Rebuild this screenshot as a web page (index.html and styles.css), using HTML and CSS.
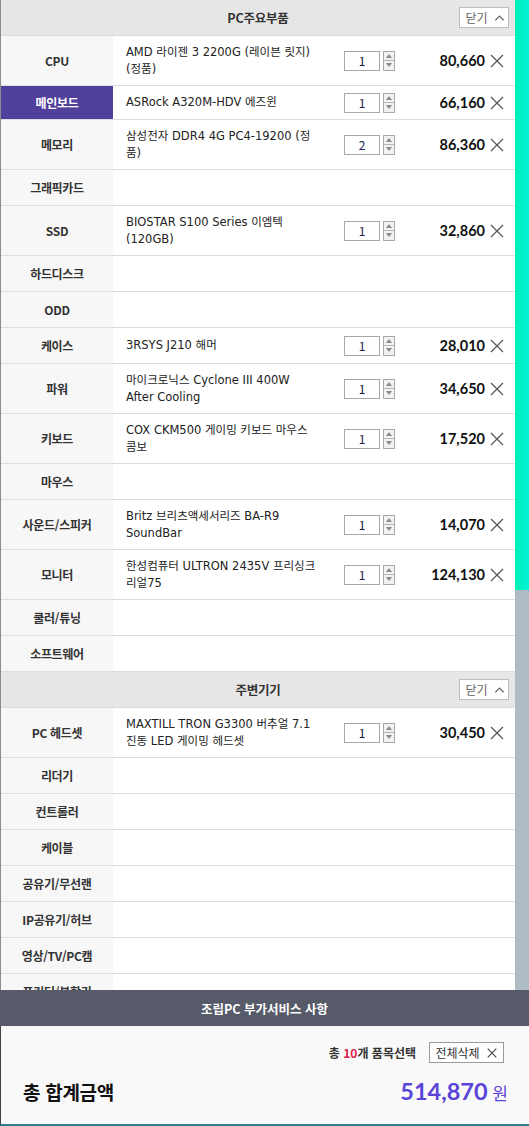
FILE: index.html
```html
<!DOCTYPE html>
<html lang="ko">
<head>
<meta charset="utf-8">
<title>PC 견적</title>
<link rel="stylesheet" href="styles.css">
</head>
<body>
<div class="page">
  <main class="list">
    <section class="group">
      <div class="group-head">
        <h2 class="group-title">PC주요부품</h2>
        <button class="fold">닫기 <svg viewBox="0 0 12 8" class="chev"><path d="M1.5 6.5 L6 2 L10.5 6.5" fill="none" stroke="#666" stroke-width="1.3"/></svg></button>
      </div>

      <div class="row">
        <div class="label">CPU</div>
        <div class="name">AMD 라이젠 3 2200G (레이븐 릿지) (정품)</div>
        <div class="qty"><span class="qty-box">1</span><span class="spin"><span class="up"></span><span class="down"></span></span></div>
        <div class="price">80,660</div>
        <div class="del"><svg viewBox="0 0 14 14"><path d="M1 1 L13 13 M13 1 L1 13" stroke="#555" stroke-width="1.2"/></svg></div>
      </div>

      <div class="row active">
        <div class="label">메인보드</div>
        <div class="name">ASRock A320M-HDV 에즈윈</div>
        <div class="qty"><span class="qty-box">1</span><span class="spin"><span class="up"></span><span class="down"></span></span></div>
        <div class="price">66,160</div>
        <div class="del"><svg viewBox="0 0 14 14"><path d="M1 1 L13 13 M13 1 L1 13" stroke="#555" stroke-width="1.2"/></svg></div>
      </div>

      <div class="row">
        <div class="label">메모리</div>
        <div class="name">삼성전자 DDR4 4G PC4-19200 (정품)</div>
        <div class="qty"><span class="qty-box">2</span><span class="spin"><span class="up"></span><span class="down"></span></span></div>
        <div class="price">86,360</div>
        <div class="del"><svg viewBox="0 0 14 14"><path d="M1 1 L13 13 M13 1 L1 13" stroke="#555" stroke-width="1.2"/></svg></div>
      </div>

      <div class="row"><div class="label">그래픽카드</div><div class="name"></div></div>

      <div class="row">
        <div class="label">SSD</div>
        <div class="name">BIOSTAR S100 Series 이엠텍 (120GB)</div>
        <div class="qty"><span class="qty-box">1</span><span class="spin"><span class="up"></span><span class="down"></span></span></div>
        <div class="price">32,860</div>
        <div class="del"><svg viewBox="0 0 14 14"><path d="M1 1 L13 13 M13 1 L1 13" stroke="#555" stroke-width="1.2"/></svg></div>
      </div>

      <div class="row"><div class="label">하드디스크</div><div class="name"></div></div>
      <div class="row"><div class="label">ODD</div><div class="name"></div></div>

      <div class="row">
        <div class="label">케이스</div>
        <div class="name">3RSYS J210 해머</div>
        <div class="qty"><span class="qty-box">1</span><span class="spin"><span class="up"></span><span class="down"></span></span></div>
        <div class="price">28,010</div>
        <div class="del"><svg viewBox="0 0 14 14"><path d="M1 1 L13 13 M13 1 L1 13" stroke="#555" stroke-width="1.2"/></svg></div>
      </div>

      <div class="row">
        <div class="label">파워</div>
        <div class="name">마이크로닉스 Cyclone III 400W After Cooling</div>
        <div class="qty"><span class="qty-box">1</span><span class="spin"><span class="up"></span><span class="down"></span></span></div>
        <div class="price">34,650</div>
        <div class="del"><svg viewBox="0 0 14 14"><path d="M1 1 L13 13 M13 1 L1 13" stroke="#555" stroke-width="1.2"/></svg></div>
      </div>

      <div class="row">
        <div class="label">키보드</div>
        <div class="name">COX CKM500 게이밍 키보드 마우스 콤보</div>
        <div class="qty"><span class="qty-box">1</span><span class="spin"><span class="up"></span><span class="down"></span></span></div>
        <div class="price">17,520</div>
        <div class="del"><svg viewBox="0 0 14 14"><path d="M1 1 L13 13 M13 1 L1 13" stroke="#555" stroke-width="1.2"/></svg></div>
      </div>

      <div class="row"><div class="label">마우스</div><div class="name"></div></div>

      <div class="row">
        <div class="label">사운드/스피커</div>
        <div class="name">Britz 브리츠액세서리즈 BA-R9 SoundBar</div>
        <div class="qty"><span class="qty-box">1</span><span class="spin"><span class="up"></span><span class="down"></span></span></div>
        <div class="price">14,070</div>
        <div class="del"><svg viewBox="0 0 14 14"><path d="M1 1 L13 13 M13 1 L1 13" stroke="#555" stroke-width="1.2"/></svg></div>
      </div>

      <div class="row">
        <div class="label">모니터</div>
        <div class="name">한성컴퓨터 ULTRON 2435V 프리싱크 리얼75</div>
        <div class="qty"><span class="qty-box">1</span><span class="spin"><span class="up"></span><span class="down"></span></span></div>
        <div class="price">124,130</div>
        <div class="del"><svg viewBox="0 0 14 14"><path d="M1 1 L13 13 M13 1 L1 13" stroke="#555" stroke-width="1.2"/></svg></div>
      </div>

      <div class="row"><div class="label">쿨러/튜닝</div><div class="name"></div></div>
      <div class="row"><div class="label">소프트웨어</div><div class="name"></div></div>
    </section>

    <section class="group">
      <div class="group-head">
        <h2 class="group-title">주변기기</h2>
        <button class="fold">닫기 <svg viewBox="0 0 12 8" class="chev"><path d="M1.5 6.5 L6 2 L10.5 6.5" fill="none" stroke="#666" stroke-width="1.3"/></svg></button>
      </div>

      <div class="row">
        <div class="label">PC 헤드셋</div>
        <div class="name">MAXTILL TRON G3300 버추얼 7.1 진동 LED 게이밍 헤드셋</div>
        <div class="qty"><span class="qty-box">1</span><span class="spin"><span class="up"></span><span class="down"></span></span></div>
        <div class="price">30,450</div>
        <div class="del"><svg viewBox="0 0 14 14"><path d="M1 1 L13 13 M13 1 L1 13" stroke="#555" stroke-width="1.2"/></svg></div>
      </div>

      <div class="row"><div class="label">리더기</div><div class="name"></div></div>
      <div class="row"><div class="label">컨트롤러</div><div class="name"></div></div>
      <div class="row"><div class="label">케이블</div><div class="name"></div></div>
      <div class="row"><div class="label">공유기/무선랜</div><div class="name"></div></div>
      <div class="row"><div class="label">IP공유기/허브</div><div class="name"></div></div>
      <div class="row"><div class="label">영상/TV/PC캠</div><div class="name"></div></div>
      <div class="row"><div class="label">프린터/복합기</div><div class="name"></div></div>
      <div class="row"><div class="label">기타</div><div class="name"></div></div>
    </section>
  </main>
  <div class="scrollbar"><div class="thumb"></div></div>
</div>

<footer class="summary">
  <div class="summary-head">조립PC 부가서비스 사항</div>
  <div class="summary-body">
    <div class="count-line">
      <span class="count">총 <em>10</em>개 품목선택</span>
      <button class="clear-all">전체삭제 <svg viewBox="0 0 14 14"><path d="M2 2 L12 12 M12 2 L2 12" stroke="#444" stroke-width="1.3"/></svg></button>
    </div>
    <div class="total-line">
      <span class="total-label">총 합계금액</span>
      <span class="total-value"><strong>514,870</strong> 원</span>
    </div>
  </div>
</footer>
</body>
</html>
```

FILE: styles.css
```css
* { box-sizing: border-box; }

html, body {
  margin: 0;
  padding: 0;
  height: 1126px;
  overflow: hidden;
  background: #ffffff;
  font-family: "Noto Sans CJK KR", "Noto Sans", sans-serif;
  color: #222;
}

.page {
  display: flex;
  height: 1126px;
  overflow: hidden;
}

.list {
  width: 515px;
  flex: none;
  border-left: 1px solid #8c8c8c;
  background: #fff;
}

.scrollbar {
  width: 14px;
  flex: none;
  background: #b0bcc4;
  height: 1126px;
}

.thumb {
  height: 590px;
  background: linear-gradient(90deg, #00f2b4 0%, #00f0c8 50%, #00f4d6 100%);
}

.group-head {
  height: 36px;
  background: #e6e6e6;
  border-bottom: 1px solid #dcdcdc;
  display: flex;
  align-items: center;
  justify-content: center;
  position: relative;
}

.group-title {
  margin: 0;
  font-size: 12.5px;
  font-weight: 700;
  color: #333;
  letter-spacing: -0.2px;
}

.fold {
  position: absolute;
  right: 6px;
  top: 7px;
  width: 50px;
  height: 21px;
  background: #fff;
  border: 1px solid #bdbdbd;
  font-family: inherit;
  font-size: 12px;
  color: #666;
  padding: 0 0 0 2px;
  display: flex;
  align-items: center;
  justify-content: center;
  gap: 6px;
  line-height: 1;
}

.chev { width: 11px; height: 8px; }

.row {
  display: grid;
  grid-template-columns: 112px 231px 52px 1fr 26px;
  align-items: center;
  min-height: 36px;
  border-bottom: 1px solid #dedede;
}

.row.active { min-height: 34px; }

.label {
  align-self: stretch;
  background: #f7f7f7;
  display: flex;
  align-items: center;
  justify-content: center;
  font-size: 12px;
  font-weight: 700;
  color: #333;
  letter-spacing: -0.3px;
}

.row.active .label {
  background: #50409c;
  color: #fff;
}

.name {
  padding: 8px 26px 8px 13px;
  font-family: "DejaVu Sans", "Noto Sans CJK KR", sans-serif;
  font-size: 11.5px;
  line-height: 16.5px;
  color: #222;
}

.row.active .name { padding-top: 7px; padding-bottom: 7px; }

.qty {
  display: flex;
  align-items: center;
  gap: 3px;
}

.qty-box {
  width: 36px;
  height: 20px;
  border: 1px solid #a8a8a8;
  background: #fff;
  display: flex;
  align-items: center;
  justify-content: center;
  font-size: 12px;
  color: #20204a;
}

.spin {
  width: 12px;
  height: 20px;
  border: 1px solid #a8a8a8;
  display: flex;
  flex-direction: column;
  background: #f2f2f2;
}

.spin .up, .spin .down {
  flex: 1;
  display: flex;
  align-items: center;
  justify-content: center;
}

.spin .up { border-bottom: 1px solid #b5b5b5; }

.spin .up::before {
  content: "";
  border-left: 3.5px solid transparent;
  border-right: 3.5px solid transparent;
  border-bottom: 4px solid #8a8a8a;
}

.spin .down::before {
  content: "";
  border-left: 3.5px solid transparent;
  border-right: 3.5px solid transparent;
  border-top: 4px solid #8a8a8a;
}

.price {
  text-align: right;
  padding-right: 4px;
  font-family: "Lato", "Liberation Sans", sans-serif;
  font-weight: 700;
  font-size: 14.5px;
  color: #111;
}

.del {
  display: flex;
  align-items: center;
  padding-left: 1px;
}

.del svg { width: 14px; height: 14px; }

.summary {
  position: fixed;
  left: 0;
  right: 0;
  bottom: 0;
  height: 136px;
  background: #f9f9f9;
  border-left: 1px solid #444;
  border-bottom: 2px solid #2f7f8c;
}

.summary-head {
  height: 36px;
  background: #565a69;
  color: #fff;
  font-size: 12.5px;
  font-weight: 700;
  display: flex;
  align-items: center;
  justify-content: center;
  margin-left: -1px;
}

.summary-body {
  padding: 16px 21px 0 22px;
}

.count-line {
  display: flex;
  justify-content: flex-end;
  align-items: center;
  gap: 13px;
  margin-right: 4px;
}

.count {
  font-size: 12px;
  font-weight: 700;
  color: #333;
}

.count em {
  font-style: normal;
  color: #e0204a;
}

.clear-all {
  height: 21px;
  width: 75px;
  border: 1px solid #9a9a9a;
  background: #fff;
  font-family: inherit;
  font-size: 12px;
  color: #333;
  display: flex;
  align-items: center;
  justify-content: center;
  gap: 6px;
  padding: 0;
}

.clear-all svg { width: 12px; height: 12px; }

.total-line {
  display: flex;
  justify-content: space-between;
  align-items: center;
  margin-top: 14px;
}

.total-label {
  font-size: 19px;
  font-weight: 700;
  color: #111;
  letter-spacing: -0.3px;
}

.total-value {
  color: #5a44d8;
  font-size: 17px;
}

.total-value strong {
  font-family: "Lato", "Liberation Sans", sans-serif;
  font-size: 23.5px;
  font-weight: 700;
}
```
